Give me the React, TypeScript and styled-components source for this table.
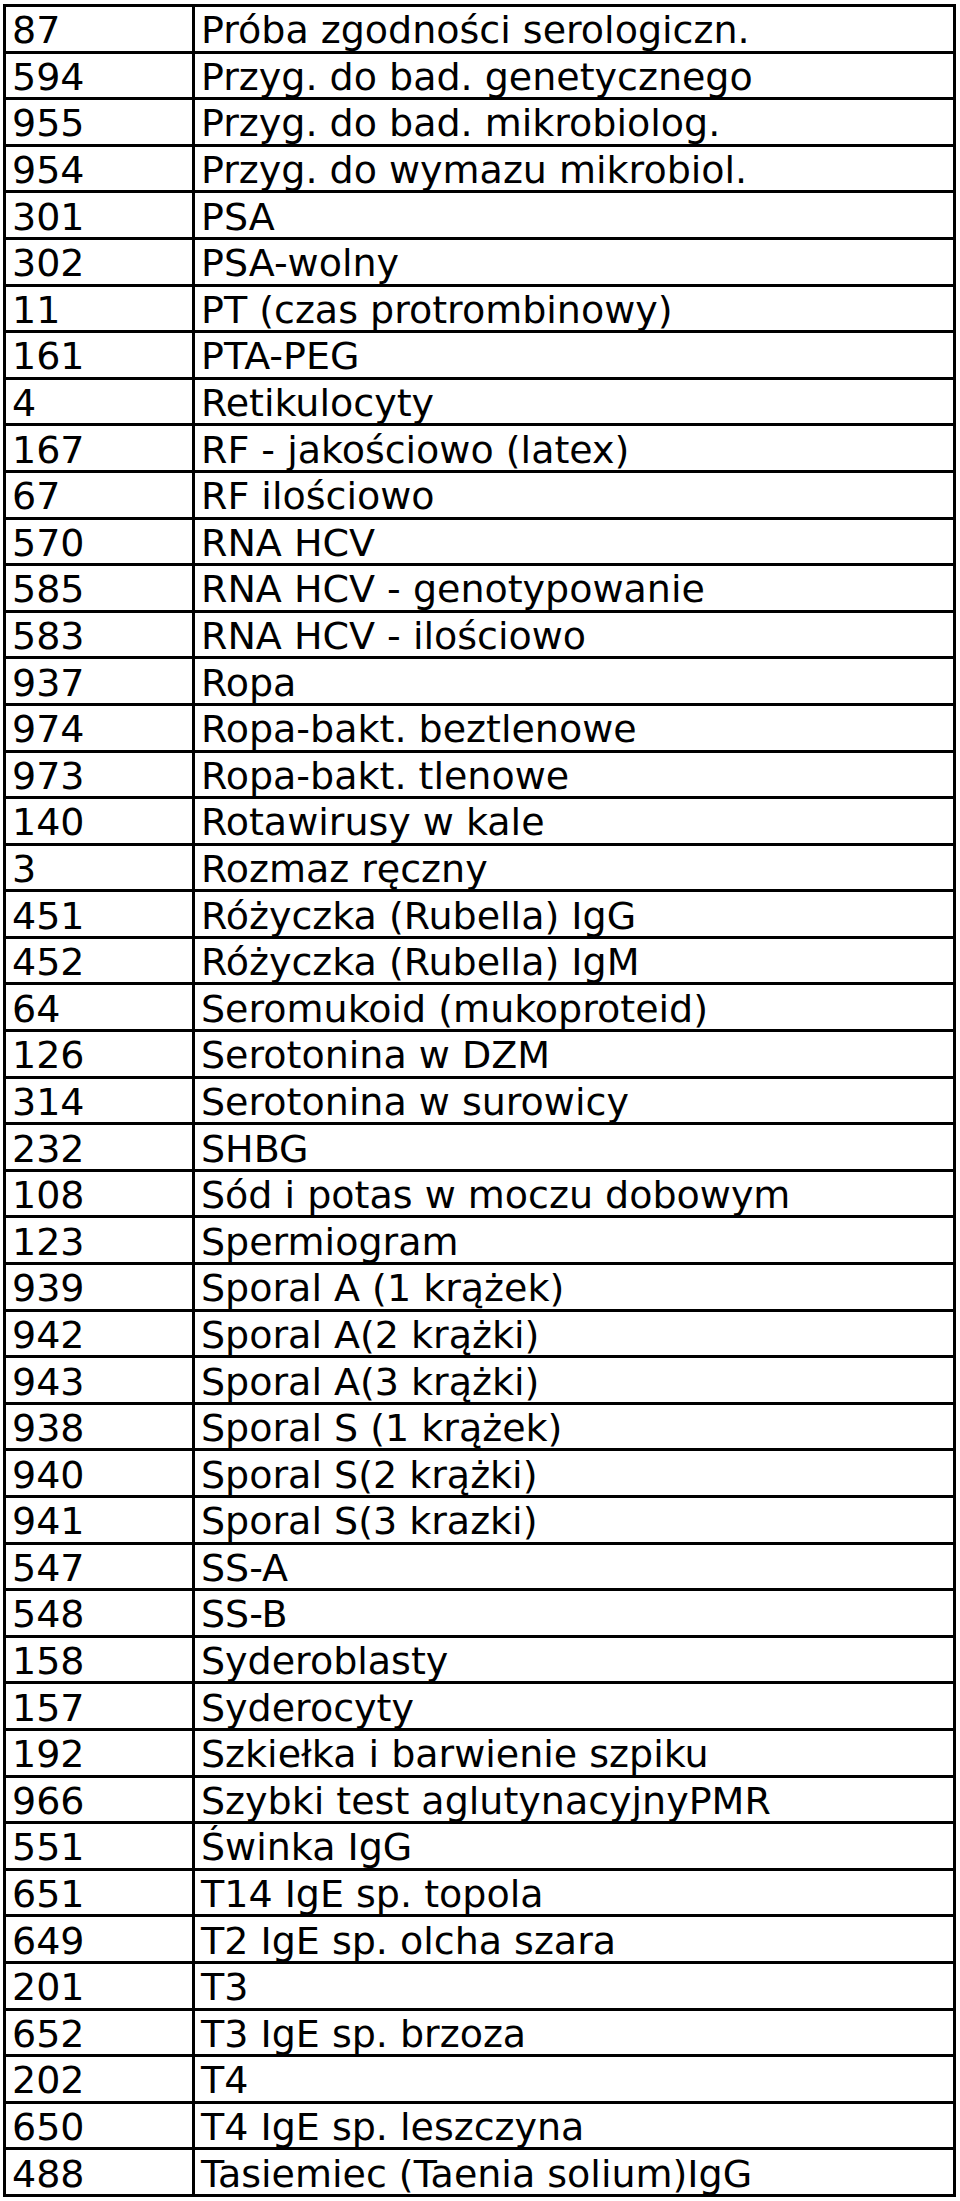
import styled, { createGlobalStyle } from 'styled-components';

type Test = {
  code: string;
  name: string;
};

const TESTS: Test[] = [
  { code: '87', name: 'Próba zgodności serologiczn.' },
  { code: '594', name: 'Przyg. do bad. genetycznego' },
  { code: '955', name: 'Przyg. do bad. mikrobiolog.' },
  { code: '954', name: 'Przyg. do wymazu mikrobiol.' },
  { code: '301', name: 'PSA' },
  { code: '302', name: 'PSA-wolny' },
  { code: '11', name: 'PT (czas protrombinowy)' },
  { code: '161', name: 'PTA-PEG' },
  { code: '4', name: 'Retikulocyty' },
  { code: '167', name: 'RF - jakościowo (latex)' },
  { code: '67', name: 'RF ilościowo' },
  { code: '570', name: 'RNA HCV' },
  { code: '585', name: 'RNA HCV - genotypowanie' },
  { code: '583', name: 'RNA HCV - ilościowo' },
  { code: '937', name: 'Ropa' },
  { code: '974', name: 'Ropa-bakt. beztlenowe' },
  { code: '973', name: 'Ropa-bakt. tlenowe' },
  { code: '140', name: 'Rotawirusy w kale' },
  { code: '3', name: 'Rozmaz ręczny' },
  { code: '451', name: 'Różyczka (Rubella) IgG' },
  { code: '452', name: 'Różyczka (Rubella) IgM' },
  { code: '64', name: 'Seromukoid (mukoproteid)' },
  { code: '126', name: 'Serotonina w DZM' },
  { code: '314', name: 'Serotonina w surowicy' },
  { code: '232', name: 'SHBG' },
  { code: '108', name: 'Sód i potas w moczu dobowym' },
  { code: '123', name: 'Spermiogram' },
  { code: '939', name: 'Sporal A (1 krążek)' },
  { code: '942', name: 'Sporal A(2 krążki)' },
  { code: '943', name: 'Sporal A(3 krążki)' },
  { code: '938', name: 'Sporal S (1 krążek)' },
  { code: '940', name: 'Sporal S(2 krążki)' },
  { code: '941', name: 'Sporal S(3 krazki)' },
  { code: '547', name: 'SS-A' },
  { code: '548', name: 'SS-B' },
  { code: '158', name: 'Syderoblasty' },
  { code: '157', name: 'Syderocyty' },
  { code: '192', name: 'Szkiełka i barwienie szpiku' },
  { code: '966', name: 'Szybki test aglutynacyjnyPMR' },
  { code: '551', name: 'Świnka IgG' },
  { code: '651', name: 'T14 IgE sp. topola' },
  { code: '649', name: 'T2 IgE sp. olcha szara' },
  { code: '201', name: 'T3' },
  { code: '652', name: 'T3 IgE sp. brzoza' },
  { code: '202', name: 'T4' },
  { code: '650', name: 'T4 IgE sp. leszczyna' },
  { code: '488', name: 'Tasiemiec (Taenia solium)IgG' },
];

const GlobalStyle = createGlobalStyle`
  html, body {
    margin: 0;
    padding: 0;
    background: #ffffff;
  }

  body {
    font-family: "DejaVu Sans", Verdana, sans-serif;
    color: #000000;
  }
`;

const Page = styled.div`
  padding: 4px 0 0 3px;
`;

const PriceTable = styled.table`
  width: 953px;
  border-collapse: collapse;
  table-layout: fixed;
`;

const CodeCol = styled.col`
  width: 189px;
`;

const Cell = styled.td`
  height: 46.6px;
  padding: 3px 0 0 6px;
  border: 3px solid #000000;
  font-size: 38px;
  line-height: 38px;
  vertical-align: middle;
  white-space: nowrap;
  overflow: hidden;
  box-sizing: border-box;
`;

const App = () => {
  const rows = TESTS.map((test) => (
    <tr key={test.code}>
      <Cell>{test.code}</Cell>
      <Cell>{test.name}</Cell>
    </tr>
  ));

  return (
    <Page>
      <GlobalStyle />
      <PriceTable>
        <colgroup>
          <CodeCol />
          <col />
        </colgroup>
        <tbody>{rows}</tbody>
      </PriceTable>
    </Page>
  );
};

export default App;
